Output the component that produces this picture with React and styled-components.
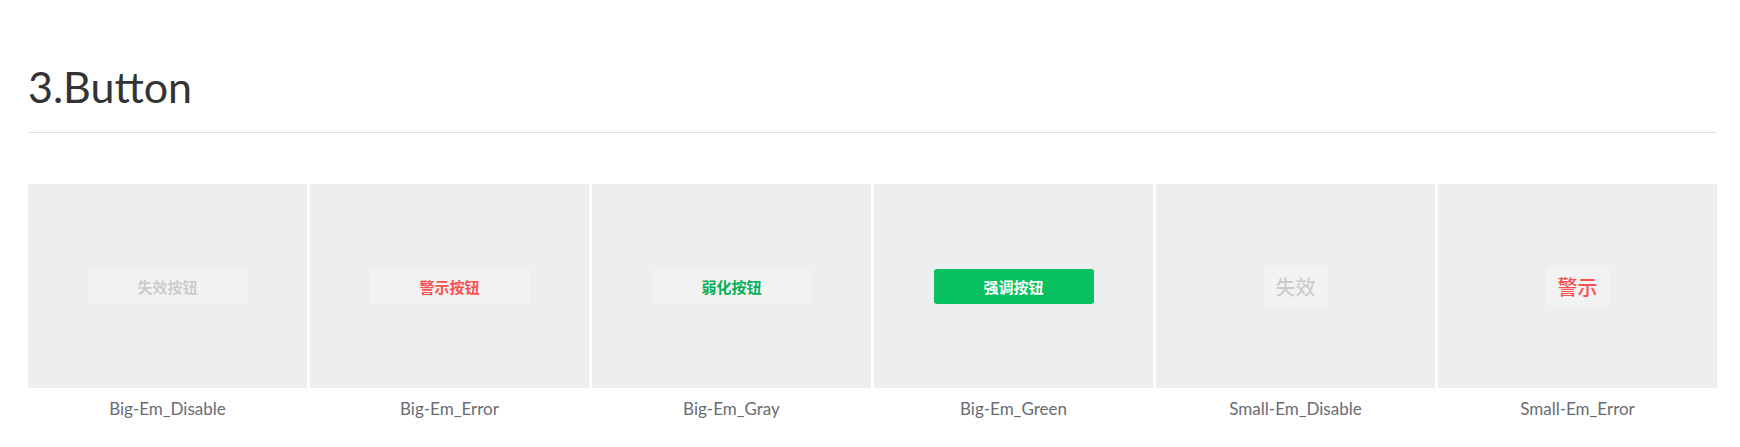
import React from 'react'
import styled, { createGlobalStyle } from 'styled-components'

const GlobalStyle = createGlobalStyle`
  body {
    margin: 0;
    background: #fff;
    font-family: Lato, "Noto Sans", "Noto Sans CJK SC", sans-serif;
  }
`

const Page = styled.div`
  padding: 61px 23px 0 28px;
`

const Heading = styled.h2`
  margin: 0;
  font-family: Lato, "Noto Sans", sans-serif;
  font-size: 43px;
  line-height: 52px;
  font-weight: 400;
  color: #333;
`

const Divider = styled.hr`
  margin: 19px 0 0;
  border: none;
  height: 1px;
  background: #e0e0e0;
`

const Grid = styled.div`
  margin-top: 51px;
  display: grid;
  grid-template-columns: repeat(6, 1fr);
  gap: 3px;
`

const Item = styled.div`
  display: flex;
  flex-direction: column;
  align-items: center;
`

const Preview = styled.div`
  width: 100%;
  height: 204px;
  background: #edeef0;
  display: flex;
  align-items: center;
  justify-content: center;
`

const colors = {
  disable: { bg: '#f2f2f3', fg: 'rgba(0,0,0,0.18)' },
  error: { bg: '#f2f2f3', fg: '#fa5151' },
  gray: { bg: '#f2f2f3', fg: '#06ae56' },
  green: { bg: '#07c160', fg: '#fff' },
}

const Btn = styled.div`
  box-sizing: border-box;
  width: ${(p) => (p.size === 'small' ? 'auto' : '160px')};
  height: ${(p) => (p.size === 'small' ? '40px' : '35px')};
  padding: ${(p) => (p.size === 'small' ? '0 12px' : '0')};
  border-radius: ${(p) => (p.size === 'small' ? '4px' : '3px')};
  background: ${(p) => colors[p.kind].bg};
  color: ${(p) => colors[p.kind].fg};
  font-family: "Noto Sans CJK SC", sans-serif;
  font-size: ${(p) => (p.size === 'small' ? '20px' : '15px')};
  font-weight: ${(p) => (p.size === 'small' ? 500 : 700)};
  display: flex;
  align-items: center;
  justify-content: center;
`

const Label = styled.div`
  margin-top: 9px;
  font-family: Lato, "Noto Sans", sans-serif;
  font-size: 17px;
  line-height: 24px;
  color: #686c74;
`

const items = [
  { label: 'Big-Em_Disable', text: '失效按钮', kind: 'disable', size: 'big' },
  { label: 'Big-Em_Error', text: '警示按钮', kind: 'error', size: 'big' },
  { label: 'Big-Em_Gray', text: '弱化按钮', kind: 'gray', size: 'big' },
  { label: 'Big-Em_Green', text: '强调按钮', kind: 'green', size: 'big' },
  { label: 'Small-Em_Disable', text: '失效', kind: 'disable', size: 'small' },
  { label: 'Small-Em_Error', text: '警示', kind: 'error', size: 'small' },
]

const App = () => {
  return (
    <>
      <GlobalStyle />
      <Page>
        <Heading>3.Button</Heading>
        <Divider />
        <Grid>
          {items.map((it) => (
            <Item key={it.label}>
              <Preview>
                <Btn kind={it.kind} size={it.size}>{it.text}</Btn>
              </Preview>
              <Label>{it.label}</Label>
            </Item>
          ))}
        </Grid>
      </Page>
    </>
  )
}

export default App
